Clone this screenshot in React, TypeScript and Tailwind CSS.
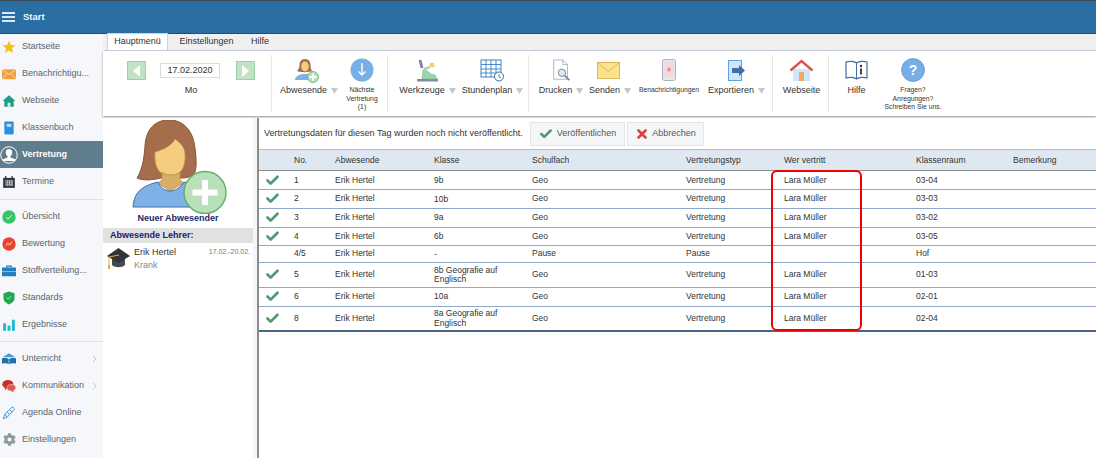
import { Check, X } from "lucide-react";
import type { ReactNode } from "react";
import { FaCog } from "react-icons/fa";

function Svg({ size = 14, children, view = "0 0 24 24" }: { size?: number; children: ReactNode; view?: string }) {
  return (
    <svg width={size} height={size} viewBox={view} className="shrink-0">
      {children}
    </svg>
  );
}

const navTop = [
  {
    label: "Startseite",
    icon: (
      <Svg>
        <path d="M12 1l3.200 7.400 8 .7-6.100 5.200 1.900 7.900L12 18l-7 4.200 1.900-7.900L.8 9.100l8-.7z" fill="#f5c211" />
      </Svg>
    ),
  },
  {
    label: "Benachrichtigu...",
    icon: (
      <Svg>
        <rect x="0" y="4" width="24" height="17" fill="#f2a03d" />
        <path d="M0 4l12 9 12-9M0 21l9-10M24 21l-9-10" fill="none" stroke="#fde3bd" strokeWidth="1.400" />
      </Svg>
    ),
  },
  {
    label: "Webseite",
    icon: (
      <Svg>
        <path d="M12 2L1 12h3v10h16V12h3z" fill="#1f9a86" />
        <rect x="9.500" y="15" width="5" height="7" fill="#d8f0ea" />
      </Svg>
    ),
  },
  {
    label: "Klassenbuch",
    icon: (
      <Svg>
        <rect x="4" y="1" width="16" height="22" rx="1.500" fill="#2e8fdc" />
        <rect x="8" y="5" width="8" height="5" fill="#bfe0f8" />
      </Svg>
    ),
  },
  {
    label: "Vertretung",
    active: true,
    icon: (
      <Svg size={18}>
        <circle cx="12" cy="12" r="11" fill="none" stroke="#fff" strokeWidth="1.300" />
        <path d="M12 4c-3 0-4.500 2.200-4.300 5 .1 2 1 3.500 2.300 4.700v1.500c-2 1-5.500 1.300-7 3.300L4 20l16 0 1-1.500c-1.500-2-5-2.300-7-3.300v-1.500c1.300-1.200 2.200-2.700 2.300-4.700.2-2.800-1.300-5-4.300-5z" fill="#fff" />
      </Svg>
    ),
  },
  {
    label: "Termine",
    icon: (
      <Svg>
        <rect x="2" y="5" width="20" height="17" fill="#2c3440" />
        <rect x="5" y="2" width="2.500" height="5" fill="#2c3440" />
        <rect x="16" y="2" width="2.500" height="5" fill="#2c3440" />
        <path d="M5 10h14M5 13.500h14M5 17h14M9 9v10M13 9v10M17 9v10" stroke="#e5e9ee" strokeWidth="1.200" />
      </Svg>
    ),
  },
];

const navMid = [
  {
    label: "Übersicht",
    icon: (
      <Svg>
        <circle cx="12" cy="12" r="11.500" fill="#35c46a" />
        <path d="M7.500 12.500l3 3 6-6.500" fill="none" stroke="#c8f2d6" strokeWidth="1.800" />
      </Svg>
    ),
  },
  {
    label: "Bewertung",
    icon: (
      <Svg>
        <circle cx="12" cy="12" r="11.500" fill="#e8432f" />
        <path d="M7 15l3-5 3 4 4-6" fill="none" stroke="#ffd6cf" strokeWidth="1.600" />
      </Svg>
    ),
  },
  {
    label: "Stoffverteilung...",
    icon: (
      <Svg>
        <path d="M8 6V3.500h8V6" fill="none" stroke="#1f7fc0" strokeWidth="2" />
        <rect x="0" y="6" width="24" height="15" rx="1" fill="#1f7fc0" />
        <path d="M0 13h24" stroke="#bfe0f8" strokeWidth="1.200" />
      </Svg>
    ),
  },
  {
    label: "Standards",
    icon: (
      <Svg>
        <path d="M12 1l9.500 3v8c0 5.500-4 9-9.500 11C6.500 21 2.500 17.500 2.500 12V4z" fill="#22a851" />
        <path d="M8.500 11.500l2.500 2.500 4.500-5" fill="none" stroke="#c8f2d6" strokeWidth="1.500" />
      </Svg>
    ),
  },
  {
    label: "Ergebnisse",
    icon: (
      <Svg>
        <rect x="2" y="9" width="5" height="13" fill="#22b8d6" />
        <rect x="9.500" y="13" width="5" height="9" fill="#22b8d6" />
        <rect x="17" y="3" width="5" height="19" fill="#22b8d6" />
      </Svg>
    ),
  },
];

const navBottom = [
  {
    label: "Unterricht",
    arrow: true,
    icon: (
      <Svg>
        <path d="M12 2L1 9h22z" fill="#4a9ad4" />
        <path d="M0 11c4-1 9-.5 11.500 1v9C9 19.500 4 19 0 20zM24 11c-4-1-9-.5-11.500 1v9c2.500-1.500 7.500-2 11.500-1z" fill="#1f6fa8" />
      </Svg>
    ),
  },
  {
    label: "Kommunikation",
    arrow: true,
    icon: (
      <Svg>
        <ellipse cx="10" cy="9" rx="9.500" ry="7.500" fill="#c9302c" />
        <path d="M6 14l-1 5 6-4z" fill="#c9302c" />
        <ellipse cx="16" cy="15" rx="7.500" ry="5.500" fill="#e0584f" stroke="#f5f7fa" strokeWidth=".8" />
        <path d="M18 19l3 4-7-3z" fill="#e0584f" />
      </Svg>
    ),
  },
  {
    label: "Agenda Online",
    icon: (
      <Svg>
        <path d="M2 22l3-8L17 2c2-1 5 2 4 4L9 19zM5 14l4 5M13 6l4 5M9 10l4 5" fill="none" stroke="#4a9ad4" strokeWidth="1.700" />
      </Svg>
    ),
  },
  {
    label: "Einstellungen",
    icon: <FaCog size={13} className="shrink-0 text-[#8a9a9e]" />,
  },
];

type NavEntry = { label: string; icon: ReactNode; active?: boolean; arrow?: boolean };

function NavItem({ item }: { item: NavEntry }) {
  return (
    <div
      className={`flex h-[27px] items-center ${
        item.active ? "bg-[#5f7d8c] font-bold text-white" : "text-[#5b6470]"
      }`}
    >
      <div className="mr-[4px] flex w-[18px] shrink-0 justify-center">{item.icon}</div>
      <span className="whitespace-nowrap">{item.label}</span>
      {item.arrow && (
        <svg width="5" height="8" viewBox="0 0 5 8" className="ml-auto mr-[6px]">
          <path d="M1 1l3 3-3 3" fill="none" stroke="#c4c8cc" strokeWidth="1" />
        </svg>
      )}
    </div>
  );
}

function Sidebar() {
  return (
    <aside className="flex w-[103px] shrink-0 flex-col bg-[#f5f7fa] text-[9px]">
      <div className="-mt-px">
        {navTop.map((n) => (
          <NavItem key={n.label} item={n} />
        ))}
      </div>
      <div className="my-[3.5px] h-px bg-[#dfe2e5]" />
      {navMid.map((n) => (
        <NavItem key={n.label} item={n} />
      ))}
      <div className="mb-[3.5px] mt-[2.5px] h-px bg-[#dfe2e5]" />
      {navBottom.map((n) => (
        <NavItem key={n.label} item={n} />
      ))}
    </aside>
  );
}

function Caret() {
  return (
    <svg width="7" height="7" viewBox="0 0 7 7" className="ml-[4px] shrink-0">
      <path d="M0 1h7L3.500 7z" fill="#c4c8cc" />
    </svg>
  );
}

function RibbonItem({
  w,
  icon,
  label,
  caret,
  small,
}: {
  w: string;
  icon: ReactNode;
  label: ReactNode;
  caret?: boolean;
  small?: boolean;
}) {
  return (
    <div className={`flex shrink-0 flex-col items-center ${w}`}>
      <div className="flex h-[26px] items-center justify-center">{icon}</div>
      {small ? (
        <div className="mt-[3px] whitespace-nowrap text-center text-[6.8px] leading-[8.5px] text-[#333]">{label}</div>
      ) : (
        <div className="mt-[1px] flex items-center whitespace-nowrap text-[9px] leading-[12px] text-[#333]">
          {label}
          {caret && <Caret />}
        </div>
      )}
    </div>
  );
}

function AbsentIcon() {
  return (
    <div className="-ml-[5px]">
      <Svg size={25} view="0 0 25 25">
        <path d="M11 1C7 1 5.500 4 5.500 7c0 3-1 4.500-2.500 6 2 1.500 13 1.500 15 0-1-1.500-1.500-3-1.500-6 0-3-1.500-6-5.500-6z" fill="#a56d4c" />
        <ellipse cx="11" cy="8.500" rx="3.800" ry="5" fill="#f5cd7e" />
        <path d="M1 22c0-4 5-5.500 7-6h6c2 .5 6 2 7 6z" fill="#7fb0e6" />
        <circle cx="19" cy="19" r="5.500" fill="#b9e0bb" stroke="#5fae6a" strokeWidth=".8" />
        <path d="M19 15.500v7M15.500 19h7" stroke="#fff" strokeWidth="1.800" />
      </Svg>
    </div>
  );
}

function Ribbon() {
  return (
    <div className="flex h-[65px] shrink-0 bg-white shadow-[0_1px_2px_rgba(0,0,0,0.45)]">
      <div className="flex w-[168px] shrink-0 flex-col items-center pl-[8px] pt-[10px]">
        <div className="flex items-center">
          <div className="flex h-[19px] w-[19px] items-center justify-center border border-[#9fcfa8] bg-[#bfe3c4]">
            <div className="h-0 w-0 border-y-[6px] border-r-[7px] border-y-transparent border-r-white" />
          </div>
          <div className="ml-[14px] mr-[16px] flex h-[15px] w-[60px] items-center justify-center border border-[#dcdcdc] text-[9px] text-[#333]">
            17.02.2020
          </div>
          <div className="flex h-[19px] w-[19px] items-center justify-center border border-[#9fcfa8] bg-[#bfe3c4]">
            <div className="h-0 w-0 border-y-[6px] border-l-[7px] border-y-transparent border-l-white" />
          </div>
        </div>
        <span className="mt-[4px] text-[9px] text-[#333]">Mo</span>
      </div>

      <div className="my-[4px] flex w-[116px] shrink-0 border-l border-[#e6e6e6] pl-[8px] pt-[2px]">
        <RibbonItem w="w-[58px]" caret label="Abwesende" icon={<AbsentIcon />} />
        <RibbonItem
          w="w-[46px] ml-[1px]"
          small
          label={
            <>
              Nächste
              <br />
              Vertretung
              <br />
              (1)
            </>
          }
          icon={
            <Svg size={24}>
              <circle cx="12" cy="12" r="11.500" fill="#78aee8" />
              <path d="M12 5v12M8.500 13.500L12 17l3.500-3.500" fill="none" stroke="#fff" strokeWidth="1.400" />
            </Svg>
          }
        />
      </div>

      <div className="my-[4px] flex w-[141px] shrink-0 gap-[7px] border-l border-[#e6e6e6] pl-[12px] pt-[2px]">
        <RibbonItem
          w="w-[55px]"
          caret
          label="Werkzeuge"
          icon={
            <Svg size={25} view="0 0 25 25">
              <rect x="2" y="21" width="21" height="2.500" fill="#7a8ea0" />
              <path d="M7 21l1-9 2-1 6 5 4 1 2 4z" fill="#9fd3b0" stroke="#6fae88" strokeWidth=".5" />
              <path d="M5 2l2 8" stroke="#8a7ab0" strokeWidth="2.800" />
              <path d="M9 11l6-2" stroke="#9fd3b0" strokeWidth="2" />
              <circle cx="17" cy="7" r="2.500" fill="#f2cf6d" />
            </Svg>
          }
        />
        <RibbonItem
          w="w-[61px]"
          caret
          label="Stundenplan"
          icon={
            <Svg size={25} view="0 0 25 25">
              <rect x="1" y="2" width="20" height="17" fill="#fff" stroke="#3b7fc4" />
              <path d="M1 6.500h20M1 11h20M1 15h20M6 2v17M11 2v17M16 2v17" stroke="#3b7fc4" strokeWidth=".9" />
              <circle cx="19" cy="18.500" r="4.500" fill="#fff" stroke="#2f6ba8" />
              <path d="M19 16v3l2 1" fill="none" stroke="#2f6ba8" strokeWidth=".8" />
            </Svg>
          }
        />
      </div>

      <div className="my-[4px] flex w-[244px] shrink-0 border-l border-[#e6e6e6] pl-[10px] pt-[2px]">
        <RibbonItem
          w="w-[44px]"
          caret
          label="Drucken"
          icon={
            <Svg size={23} view="0 0 25 25">
              <path d="M4 1h10l5 5v16H4z" fill="#fff" stroke="#a9b4c0" />
              <path d="M14 1v5h5" fill="none" stroke="#a9b4c0" />
              <circle cx="13" cy="15" r="4" fill="#dbe9f6" stroke="#6f8296" />
              <path d="M16 18l5 5" stroke="#6f8296" strokeWidth="1.800" />
            </Svg>
          }
        />
        <RibbonItem
          w="w-[46px] ml-[4px]"
          caret
          label="Senden"
          icon={
            <div className="-ml-[3px]">
              <svg width="23" height="17" viewBox="0 0 23 17">
                <rect x=".5" y=".5" width="22" height="16" fill="#fbe38c" stroke="#d9b85a" />
                <path d="M.5.500l11 9 11-9" fill="none" stroke="#d9b85a" />
              </svg>
            </div>
          }
        />
        <RibbonItem
          w="w-[68px] ml-[2px]"
          label={<span className="text-[6.8px]">Benachrichtigungen</span>}
          icon={
            <svg width="14" height="22" viewBox="0 0 14 22">
              <rect x=".5" y=".5" width="13" height="21" rx="2" fill="#e3e8ee" stroke="#a9b4c0" />
              <rect x="2" y="3" width="10" height="15" fill="#f3d9de" />
              <circle cx="7" cy="10.500" r="2" fill="#ee8d9b" />
            </svg>
          }
        />
        <RibbonItem
          w="w-[57px] ml-[5px]"
          caret
          label="Exportieren"
          icon={
            <svg width="18" height="21" viewBox="0 0 18 21">
              <rect x=".5" y=".5" width="13" height="20" fill="#cfe6fa" stroke="#5da3dd" />
              <path d="M4 8h7V5l6 5.500-6 5.500v-3H4z" fill="#3f6ea8" />
            </svg>
          }
        />
      </div>

      <div className="my-[4px] flex w-[56px] shrink-0 justify-center border-l border-[#e6e6e6] pl-[2px] pt-[2px]">
        <RibbonItem
          w="w-[50px]"
          label="Webseite"
          icon={
            <Svg size={25} view="0 0 25 25">
              <path d="M4 11h17v12H4z" fill="#cfe6fa" />
              <rect x="10" y="14" width="5" height="9" fill="#f2a65e" />
              <path d="M1.500 12.500L12.500 3l11 9.500" fill="none" stroke="#d9534f" strokeWidth="2.400" />
            </Svg>
          }
        />
      </div>

      <div className="my-[4px] flex flex-1 border-l border-[#e6e6e6] pt-[2px]">
        <RibbonItem
          w="w-[55px]"
          label="Hilfe"
          icon={
            <svg width="23" height="21" viewBox="0 0 23 21">
              <path d="M11.500 3C9 1 4 1 1 2v16c3-1 8-1 10.500 1 2.500-2 7.500-2 10.500-1V2c-3-1-8-1-10.500 1z" fill="#fff" stroke="#3f6ea8" strokeWidth="1.200" />
              <path d="M11.500 3v16" stroke="#3f6ea8" />
              <circle cx="16" cy="6" r="1.200" fill="#333" />
              <path d="M16 8.500v6" stroke="#333" strokeWidth="1.800" />
            </svg>
          }
        />
        <RibbonItem
          w="w-[58px]"
          small
          label={
            <>
              Fragen?
              <br />
              Anregungen?
              <br />
              Schreiben Sie uns.
            </>
          }
          icon={
            <Svg size={24}>
              <circle cx="12" cy="12" r="11.500" fill="#78aee8" stroke="#4f86c8" strokeWidth=".6" />
              <text x="12" y="17" textAnchor="middle" fontSize="14" fontWeight="700" fill="#fff" fontFamily="Liberation Sans">
                ?
              </text>
            </Svg>
          }
        />
      </div>
    </div>
  );
}

function AbsentPanel() {
  return (
    <div className="flex w-[150px] shrink-0 flex-col bg-white">
      <div className="flex h-[95px] justify-center pl-[2px] pt-[2px]">
        <svg width="96" height="94" viewBox="0 0 96 94">
          <path d="M38 0C24 0 15 9 14 26c-1 14-3 24-8 32 6 3 16 2 24 0h22c6 0 10-3 12-6 2-6 1-16 0-24C62 10 52 0 38 0z" fill="#a56d4c" stroke="#8a5638" strokeWidth="1" />
          <path d="M44 19c-3 6-10 10-20 13-1 13 3 24 15 24s16-11 15-22c0-6-4-11-10-15z" fill="#f5cd7e" stroke="#b98f4d" strokeWidth=".8" />
          <path d="M31 52v8l-4 3 12 8 14-8-4-3v-8c-5 4-13 4-18 0z" fill="#d9ad63" stroke="#b98f4d" strokeWidth=".8" />
          <path d="M2 87c1-14 8-21 25-25 2 5 7 9 12 9 6 0 11-4 14-9 10 2 20 8 30 25z" fill="#7fb0e6" stroke="#3f6ea8" strokeWidth="1" />
          <circle cx="74" cy="72.500" r="21" fill="#b9e0bb" stroke="#5fae6a" strokeWidth="1.400" />
          <path d="M74 60v25M61.500 72.500h25" stroke="#fff" strokeWidth="6" />
        </svg>
      </div>
      <div className="text-center text-[9px] font-bold leading-[11px] text-[#1c2c66]">Neuer Abwesender</div>
      <div className="mt-[4px] flex h-[15px] items-center bg-[#e1e1e1] pl-[7px] text-[9px] font-bold text-[#16206e]">
        Abwesende Lehrer:
      </div>
      <div className="flex pl-[3px] pr-[3px] pt-[4px]">
        <svg width="25" height="23" viewBox="0 0 25 23" className="shrink-0">
          <path d="M6 10v8c3 3 10 3 13 0v-8z" fill="#454a50" />
          <path d="M12.500 1L24 9l-11.500 7L1 9z" fill="#2f3438" />
          <path d="M13 8L3 10v9" fill="none" stroke="#f0a92f" strokeWidth="1" />
          <rect x="2" y="18" width="2" height="4" fill="#f0a92f" />
        </svg>
        <div className="ml-[3px] flex-1">
          <div className="flex items-start justify-between">
            <span className="text-[9px] leading-[11px] text-[#333]">Erik Hertel</span>
            <span className="text-[7px] leading-[9px] text-[#777]">17.02.-20.02.</span>
          </div>
          <div className="mt-[2px] text-[9px] leading-[11px] text-[#888]">Krank</div>
        </div>
      </div>
    </div>
  );
}

const rows = [
  { no: "1", klasse: "9b", fach: "Geo", typ: "Vertretung", wer: "Lara Müller", raum: "03-04", h: "h-[19px]", ok: true },
  { no: "2", klasse: "10b", fach: "Geo", typ: "Vertretung", wer: "Lara Müller", raum: "03-03", h: "h-[18.5px]", ok: true },
  { no: "3", klasse: "9a", fach: "Geo", typ: "Vertretung", wer: "Lara Müller", raum: "03-02", h: "h-[19px]", ok: true },
  { no: "4", klasse: "6b", fach: "Geo", typ: "Vertretung", wer: "Lara Müller", raum: "03-05", h: "h-[18.5px]", ok: true },
  { no: "4/5", klasse: "-", fach: "Pause", typ: "Pause", wer: "", raum: "Hof", h: "h-[16.5px]", ok: false },
  { no: "5", klasse: "8b Geografie auf Englisch", fach: "Geo", typ: "Vertretung", wer: "Lara Müller", raum: "01-03", h: "h-[25px]", ok: true },
  { no: "6", klasse: "10a", fach: "Geo", typ: "Vertretung", wer: "Lara Müller", raum: "02-01", h: "h-[19px]", ok: true },
  { no: "8", klasse: "8a Geografie auf Englisch", fach: "Geo", typ: "Vertretung", wer: "Lara Müller", raum: "02-04", h: "h-[25px]", ok: true },
];

const gridCols = "grid grid-cols-[35px_41px_99px_98px_154px_98px_132px_97px_1fr] items-center";

function SubstitutionTable() {
  return (
    <div className="relative flex-1 text-[8.5px] leading-[11px] text-[#333]">
      <div className={`${gridCols} h-[22px] border-y border-t-[#bbbbbb] border-b-[#8a8f94] bg-[#dfe8f0]`}>
        <span />
        <span>No.</span>
        <span>Abwesende</span>
        <span>Klasse</span>
        <span>Schulfach</span>
        <span>Vertretungstyp</span>
        <span>Wer vertritt</span>
        <span>Klassenraum</span>
        <span>Bemerkung</span>
      </div>
      {rows.map((r, i) => (
        <div
          key={r.no}
          className={`${gridCols} ${r.h} ${
            i === rows.length - 1 ? "border-b-2 border-[#4b6585]" : "border-b border-[#90a8cc]"
          }`}
        >
          <span className="flex justify-center pr-[9px]">
            {r.ok && <Check size={15} strokeWidth={4.4} className="text-[#4f9a6e]" />}
          </span>
          <span>{r.no}</span>
          <span>Erik Hertel</span>
          <span className="max-w-[80px] pt-[1px] leading-[9.5px]">{r.klasse}</span>
          <span>{r.fach}</span>
          <span>{r.typ}</span>
          <span>{r.wer}</span>
          <span>{r.raum}</span>
          <span />
        </div>
      ))}
      <div className="absolute left-[511.5px] top-[21px] h-[161px] w-[91px] rounded-[6px] border-2 border-[#f00000]" />
    </div>
  );
}

export default function App() {
  return (
    <div className="flex h-[458px] w-[1096px] flex-col overflow-hidden bg-white font-['Liberation_Sans',Arial,sans-serif]">
      <header className="flex h-[34px] shrink-0 items-center gap-[8px] border-y border-t-[#3a4a55] border-b-[#1d4f78] bg-[#2a6ea3] pl-[2px] shadow-[0_1px_1px_rgba(0,0,0,0.3)]">
        <div className="flex w-[13px] flex-col gap-[2.5px]">
          <div className="h-[1.5px] bg-[#dce8f2]" />
          <div className="h-[1.5px] bg-[#dce8f2]" />
          <div className="h-[1.5px] bg-[#dce8f2]" />
        </div>
        <span className="text-[9.5px] font-bold text-[#eef4f9]">Start</span>
      </header>

      <div className="flex min-h-0 flex-1">
        <Sidebar />
        <main className="flex min-w-0 flex-1 flex-col">
          <div className="flex h-[17px] shrink-0 items-end border-b border-[#c9d3e0] bg-[#f0f0f0] pl-[4px] text-[9px] text-[#333]">
            <div className="flex h-[17px] w-[61px] items-center justify-center border-x border-t border-[#c9d3e0] bg-white">
              Hauptmenü
            </div>
            <div className="flex h-[16px] w-[77px] items-center justify-center">Einstellungen</div>
            <div className="flex h-[16px] w-[30px] items-center justify-center">Hilfe</div>
          </div>
          <Ribbon />
          <div className="flex min-h-0 flex-1 pt-[2px]">
            <AbsentPanel />
            <div className="flex min-w-0 flex-1 bg-[#f6f6f6] pl-[4px]">
              <div className="flex min-w-0 flex-1 flex-col border-l-2 border-[#8c8c8c] bg-white">
                <div className="flex h-[31px] shrink-0 items-center pl-[5px] text-[9px] text-[#333]">
                  <span className="w-[266px] whitespace-nowrap">
                    Vertretungsdaten für diesen Tag wurden noch nicht veröffentlicht.
                  </span>
                  <button className="flex h-[24px] w-[95px] items-center justify-center gap-[4px] border border-[#e2e4e6] bg-[#f5f6f8] text-[#555]">
                    <Check size={14} strokeWidth={4.4} className="text-[#4f9a6e]" />
                    Veröffentlichen
                  </button>
                  <button className="ml-[2px] flex h-[24px] w-[77px] items-center justify-center gap-[3px] border border-[#e2e4e6] bg-[#f5f6f8] text-[#555]">
                    <X size={14} strokeWidth={4.6} className="text-[#d9443f]" />
                    Abbrechen
                  </button>
                </div>
                <SubstitutionTable />
              </div>
            </div>
          </div>
        </main>
      </div>
    </div>
  );
}
